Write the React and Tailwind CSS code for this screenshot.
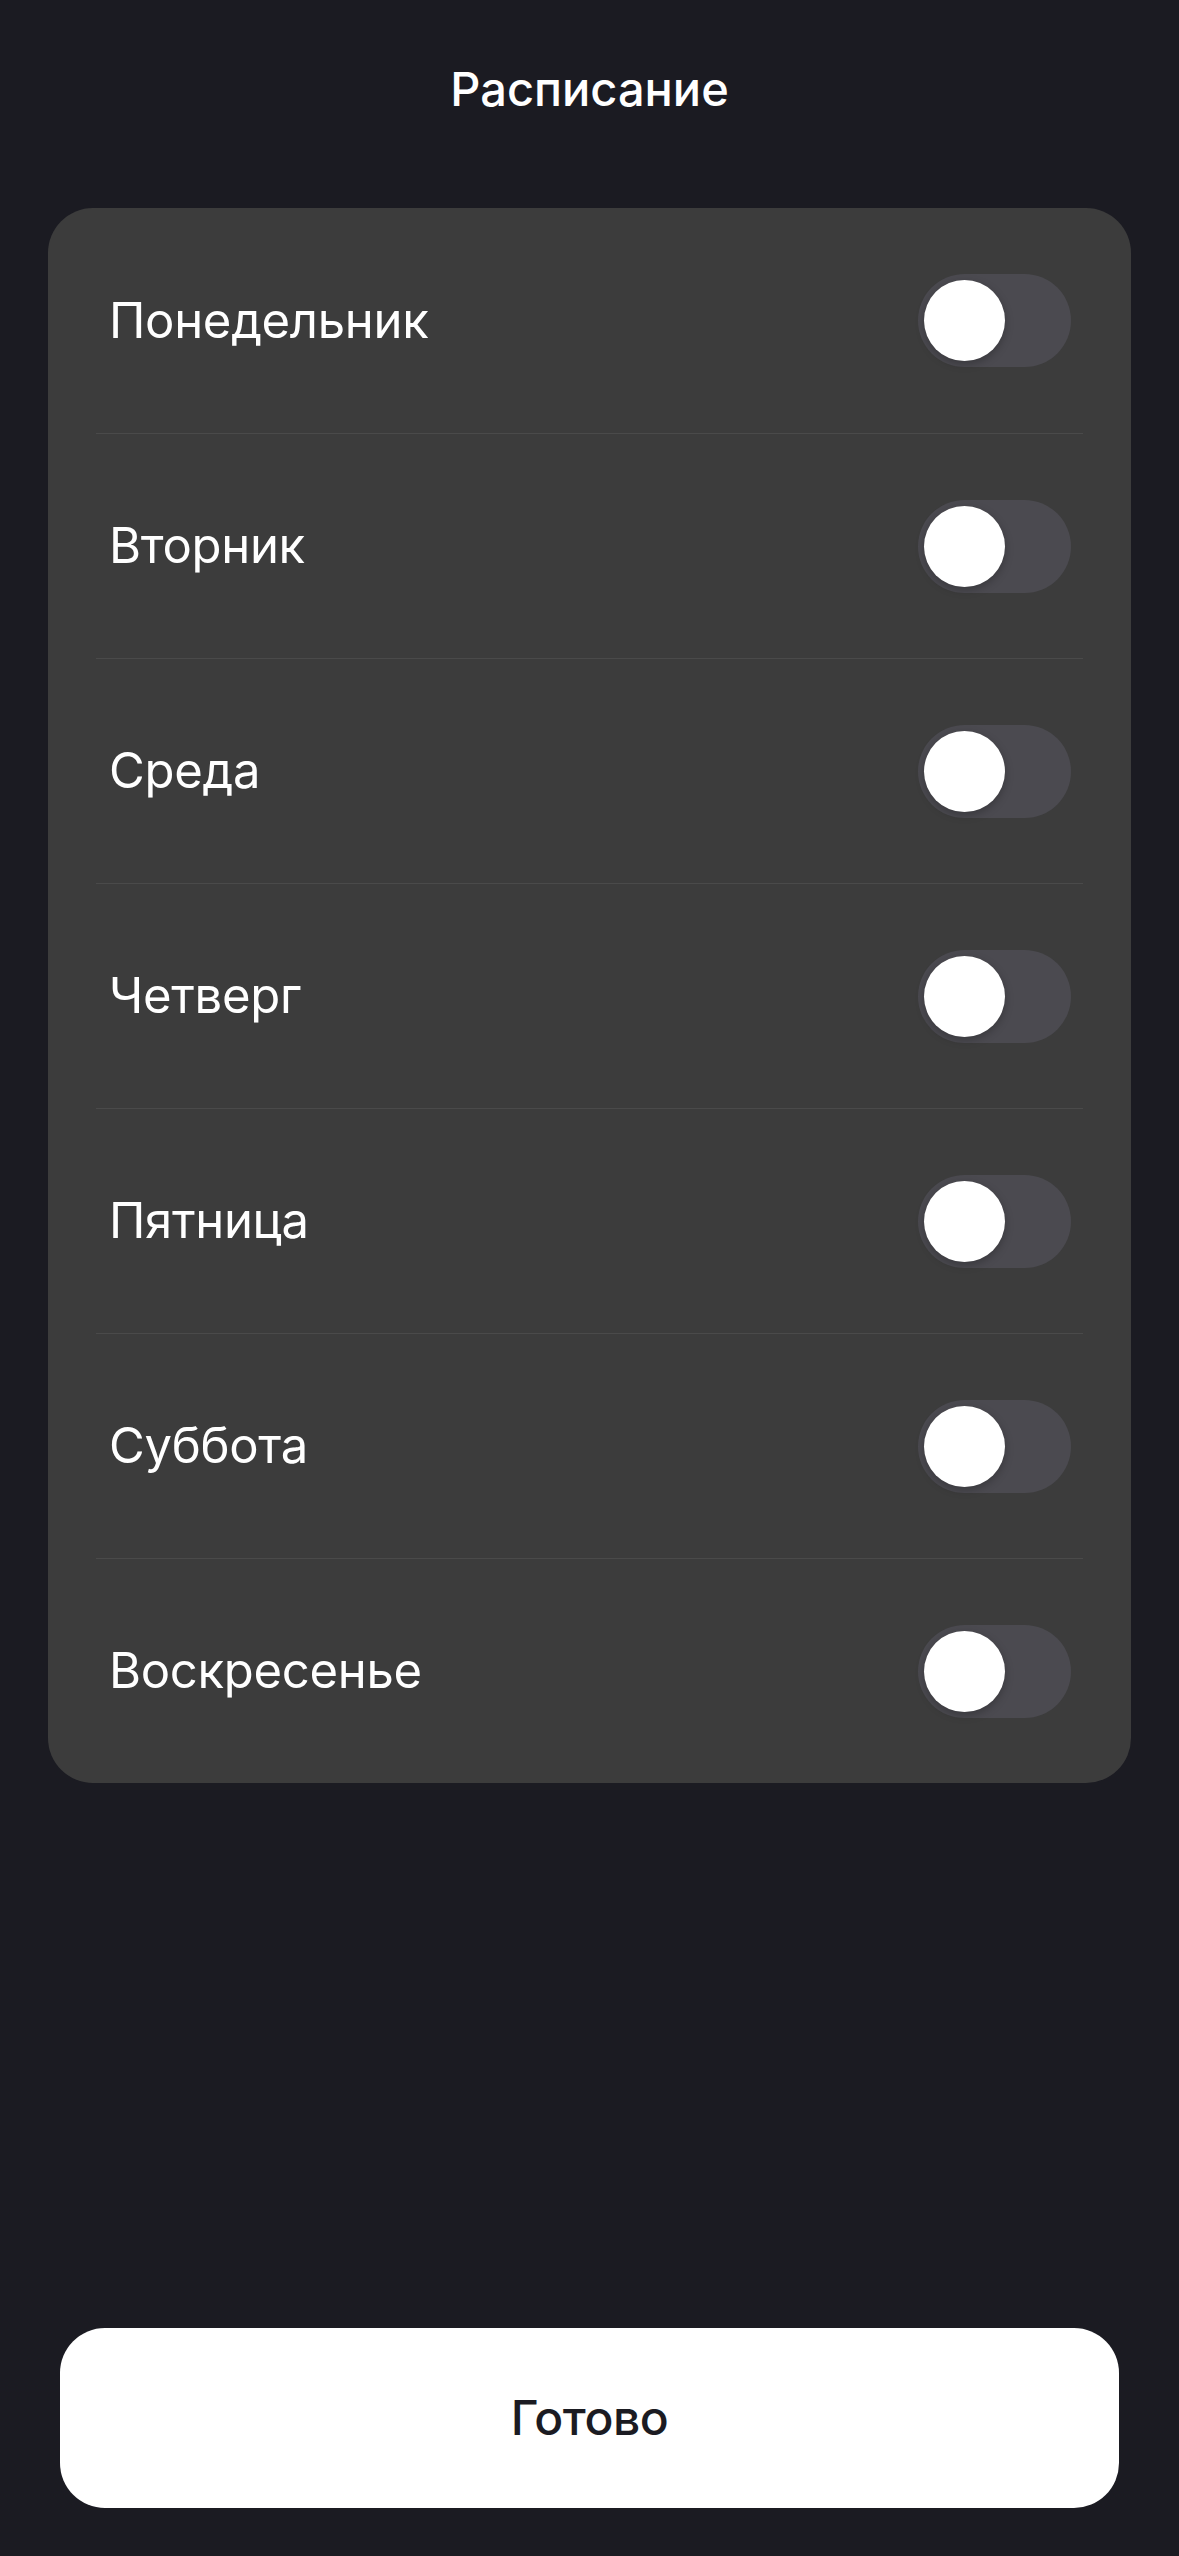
import { useState } from "react";

const DAYS = [
  "Понедельник",
  "Вторник",
  "Среда",
  "Четверг",
  "Пятница",
  "Суббота",
  "Воскресенье",
];

function Toggle({ on, onChange }) {
  return (
    <button
      onClick={onChange}
      className={`relative w-[153px] h-[93px] rounded-full shrink-0 ${
        on ? "bg-[#34c759]" : "bg-[#4b4a50]"
      }`}
    >
      <span
        className={`absolute top-[6px] w-[81px] h-[81px] rounded-full bg-white shadow-[0_3px_8px_rgba(0,0,0,0.25)] ${
          on ? "left-[66px]" : "left-[6px]"
        }`}
      />
    </button>
  );
}

export default function App() {
  const [days, setDays] = useState(DAYS.map(() => false));

  const toggle = (i) =>
    setDays((d) => d.map((v, j) => (j === i ? !v : v)));

  return (
    <div className="h-[2556px] bg-[#1b1b22] flex flex-col font-['Inter',sans-serif]">
      <header className="h-[178px] flex items-center justify-center">
        <h1 className="text-white text-[47px] font-medium">Расписание</h1>
      </header>

      <section className="mt-[30px] mx-[48px] bg-[#3c3c3c] rounded-[45px]">
        {DAYS.map((name, i) => (
          <div key={name} className="flex flex-col h-[225px]">
            {i > 0 && <div className="mx-[48px] h-px bg-[#4a4a4a]" />}
            <div className="flex-1 flex items-center justify-between pl-[61px] pr-[60px]">
              <span className="text-white text-[49px] tracking-[-0.3px]">
                {name}
              </span>
              <Toggle on={days[i]} onChange={() => toggle(i)} />
            </div>
          </div>
        ))}
      </section>

      <div className="flex-1" />

      <button className="mx-[60px] mb-[48px] h-[180px] rounded-[45px] bg-white text-[#1b1b22] text-[48px] font-medium tracking-[-0.5px]">
        Готово
      </button>
    </div>
  );
}
